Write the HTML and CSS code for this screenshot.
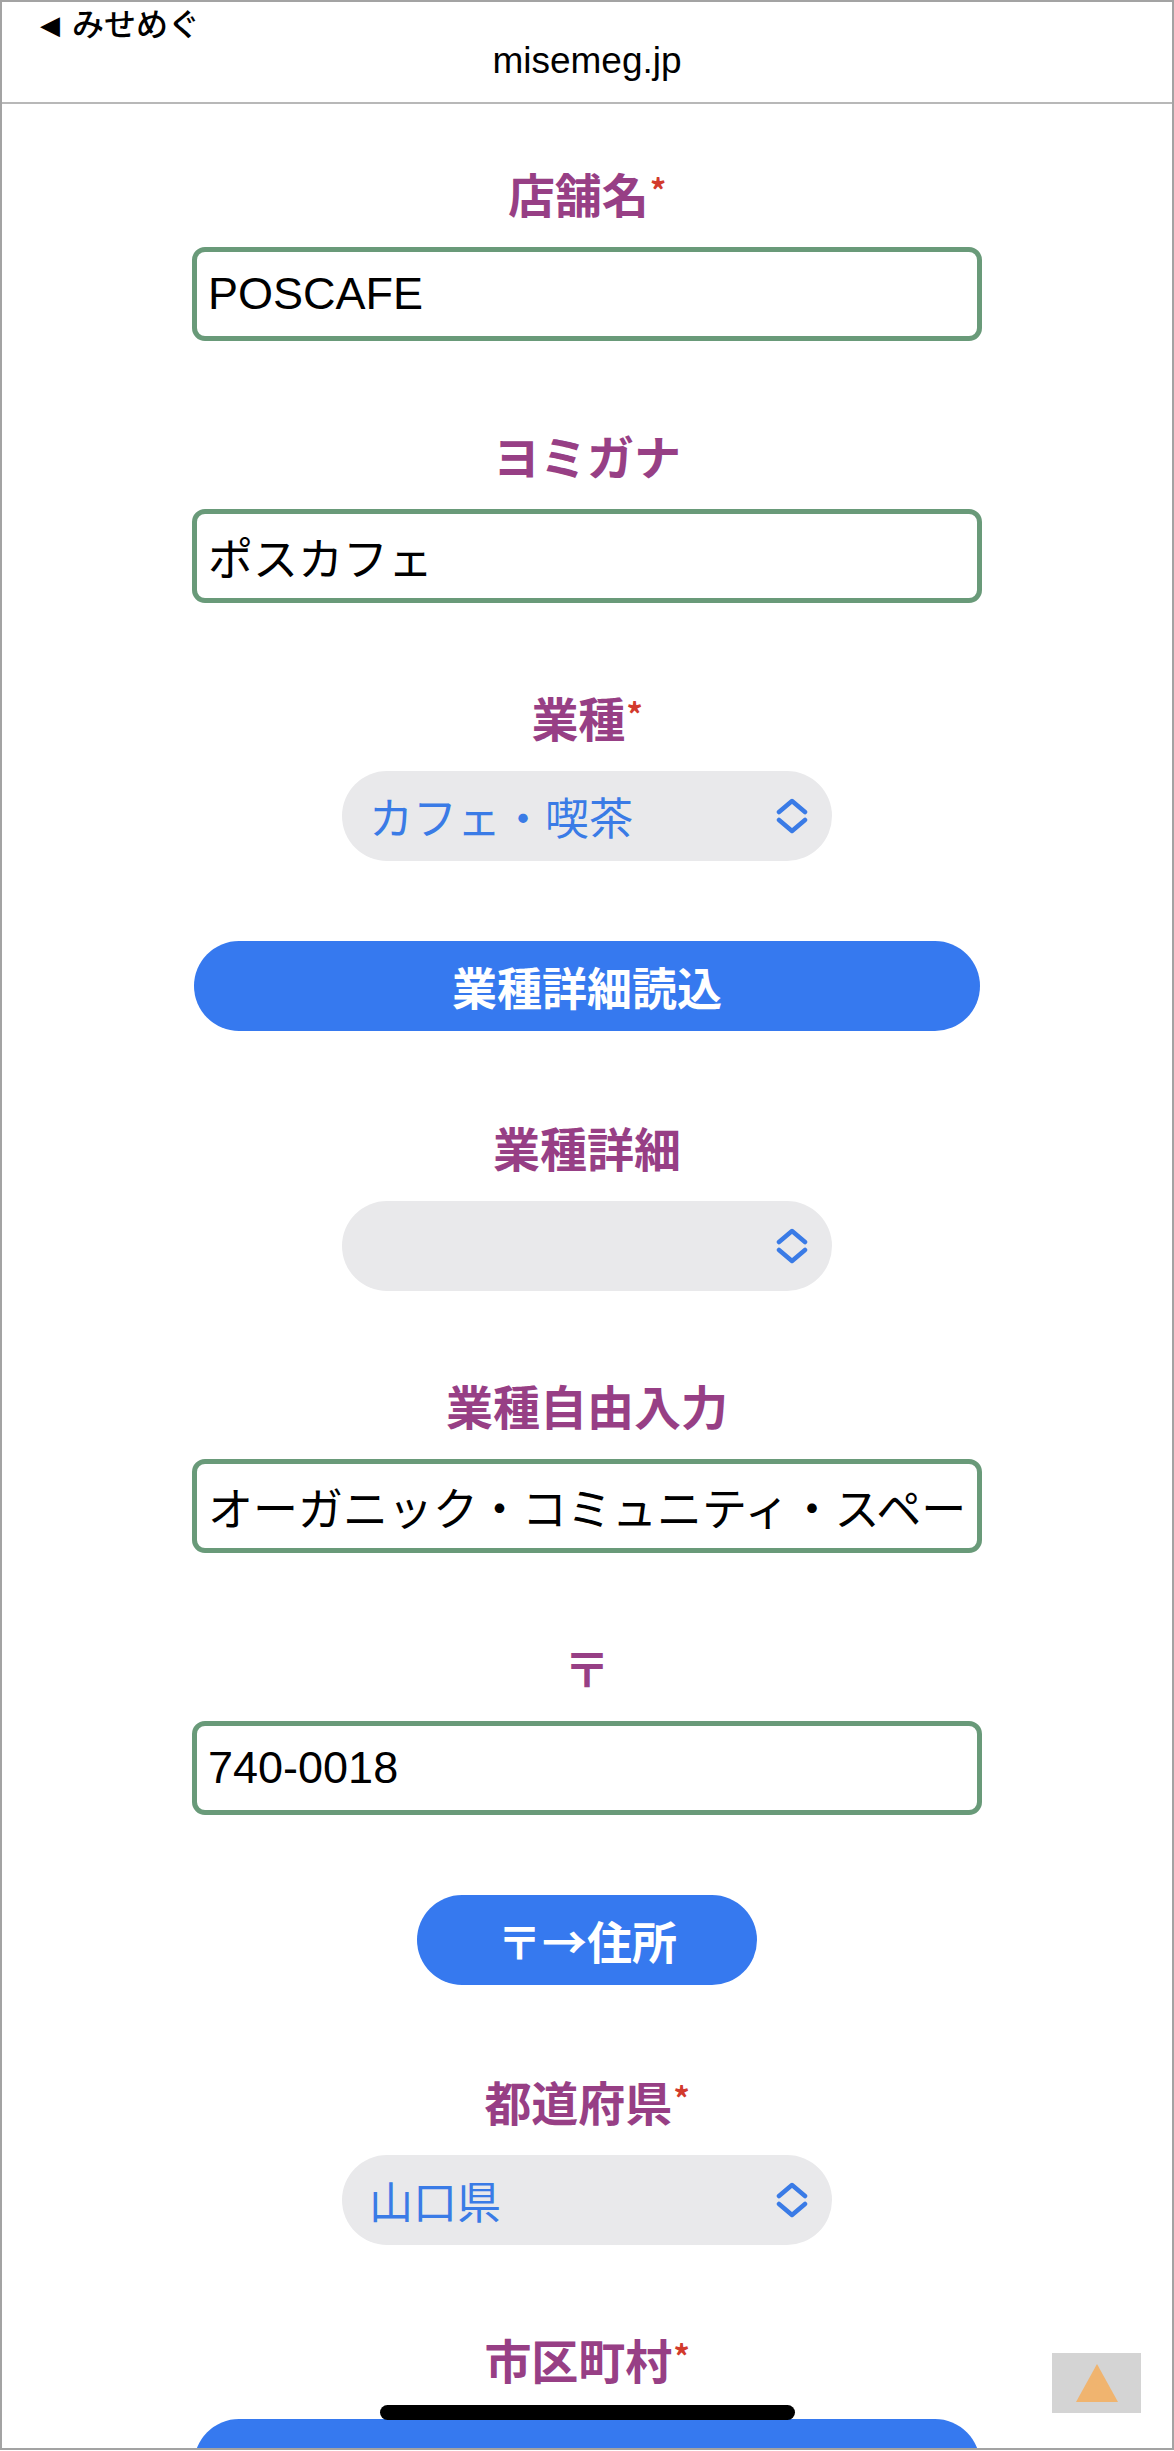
FILE: index.html
```html
<!DOCTYPE html>
<html lang="ja">
<head>
  <meta charset="UTF-8" />
  <meta name="viewport" content="width=device-width, initial-scale=1.0" />
  <title>みせめぐ 店舗登録</title>
  <link rel="stylesheet" href="styles.css">
</head>
<body>
  <div class="frame">
    <header class="topbar">
      <div class="back"><span class="back-arrow">◀</span>みせめぐ</div>
      <div class="domain">misemeg.jp</div>
    </header>

    <main class="form">
      <div class="field first">
        <label class="lbl">店舗名<span class="req">*</span></label>
        <input class="txt" type="text" value="POSCAFE" />
      </div>

      <div class="field">
        <label class="lbl">ヨミガナ</label>
        <input class="txt" type="text" value="ポスカフェ" />
      </div>

      <div class="field">
        <label class="lbl">業種<span class="req">*</span></label>
        <div class="select">
          <span>カフェ・喫茶</span>
          <svg class="chev" viewBox="0 0 32 36"><polyline points="3,14 16,3 29,14" /><polyline points="3,22 16,33 29,22" /></svg>
        </div>
      </div>

      <div class="btn-row">
        <button class="btn btn-wide">業種詳細読込</button>
      </div>

      <div class="field">
        <label class="lbl">業種詳細</label>
        <div class="select">
          <span></span>
          <svg class="chev" viewBox="0 0 32 36"><polyline points="3,14 16,3 29,14" /><polyline points="3,22 16,33 29,22" /></svg>
        </div>
      </div>

      <div class="field">
        <label class="lbl">業種自由入力</label>
        <input class="txt" type="text" value="オーガニック・コミュニティ・スペース" />
      </div>

      <div class="field">
        <label class="lbl">〒</label>
        <input class="txt" type="text" value="740-0018" />
      </div>

      <div class="btn-row">
        <button class="btn btn-small">〒→住所</button>
      </div>

      <div class="field">
        <label class="lbl">都道府県<span class="req">*</span></label>
        <div class="select">
          <span>山口県</span>
          <svg class="chev" viewBox="0 0 32 36"><polyline points="3,14 16,3 29,14" /><polyline points="3,22 16,33 29,22" /></svg>
        </div>
      </div>

      <div class="field">
        <label class="lbl">市区町村<span class="req">*</span></label>
        <button class="btn btn-wide btn-cut" aria-label="市区町村"></button>
      </div>
    </main>

    <div class="to-top" title="ページ上部へ">
      <svg viewBox="0 0 42 38"><polygon points="21,0 42,38 0,38" /></svg>
    </div>
    <div class="home-bar"></div>
  </div>
</body>
</html>
```

FILE: styles.css
```css
body {
  margin: 0;
  background: #fff;
  font-family: "Noto Sans CJK JP", "Liberation Sans", sans-serif;
}

.frame {
  position: relative;
  width: 1174px;
  height: 2450px;
  box-sizing: border-box;
  border: 2px solid #a3a3a3;
  overflow: hidden;
  background: #fff;
}

/* top bar */
.topbar {
  height: 100px;
  border-bottom: 2px solid #b8b8b8;
  display: flex;
  flex-direction: column;
}

.back {
  margin: 3px 0 0 38px;
  height: 34px;
  line-height: 34px;
  font-size: 32px;
  font-weight: 500;
  color: #000;
}

.back-arrow {
  font-family: "DejaVu Sans", sans-serif;
  font-size: 26px;
  margin-right: 12px;
  vertical-align: 2px;
}

.domain {
  margin-top: 1px;
  height: 42px;
  line-height: 42px;
  text-align: center;
  font-family: "Liberation Sans", sans-serif;
  font-size: 37px;
  color: #000;
}

/* form */
.form {
  display: flex;
  flex-direction: column;
  align-items: center;
}

.field {
  display: flex;
  flex-direction: column;
  align-items: center;
  margin-top: 84px;
}

.field.first {
  margin-top: 59px;
}

.lbl {
  display: block;
  height: 60px;
  line-height: 60px;
  margin-bottom: 24px;
  font-size: 47px;
  font-weight: bold;
  color: #973f85;
}

.req {
  color: #d23a2c;
  font-size: 32px;
  vertical-align: top;
  line-height: 52px;
  margin-left: 1px;
}

.txt {
  width: 790px;
  height: 94px;
  box-sizing: border-box;
  border: 5px solid #699a79;
  border-radius: 13px;
  padding: 0 11px;
  font-family: "Liberation Sans", "Noto Sans CJK JP", sans-serif;
  font-size: 45px;
  color: #000;
  background: #fff;
  outline: none;
}

.select {
  width: 490px;
  height: 90px;
  box-sizing: border-box;
  border-radius: 45px;
  background: #e9e9eb;
  padding: 0 24px 0 27px;
  display: flex;
  align-items: center;
  justify-content: space-between;
  font-size: 44px;
  color: #3a7be6;
}

.chev {
  width: 32px;
  height: 36px;
  fill: none;
  stroke: #3a7be6;
  stroke-width: 4.5;
  stroke-linecap: round;
  stroke-linejoin: round;
}

.btn-row {
  margin-top: 80px;
  display: flex;
  justify-content: center;
}

.btn-row + .field {
  margin-top: 86px;
}

.btn {
  height: 90px;
  border: none;
  border-radius: 45px;
  background: #3679ef;
  color: #fff;
  font-family: "Noto Sans CJK JP", sans-serif;
  font-size: 45px;
  font-weight: bold;
  cursor: pointer;
}

.btn-wide {
  width: 786px;
}

.btn-small {
  width: 340px;
}

.btn-cut {
  margin-top: 6px;
}

/* overlays */
.to-top {
  position: absolute;
  left: 1050px;
  top: 2351px;
  width: 89px;
  height: 60px;
  background: #d4d4d4;
  display: flex;
  align-items: center;
  justify-content: center;
}

.to-top svg {
  width: 42px;
  height: 38px;
  fill: #f0b46f;
}

.home-bar {
  position: absolute;
  left: 378px;
  top: 2403px;
  width: 415px;
  height: 15px;
  border-radius: 8px;
  background: #000;
}
```
